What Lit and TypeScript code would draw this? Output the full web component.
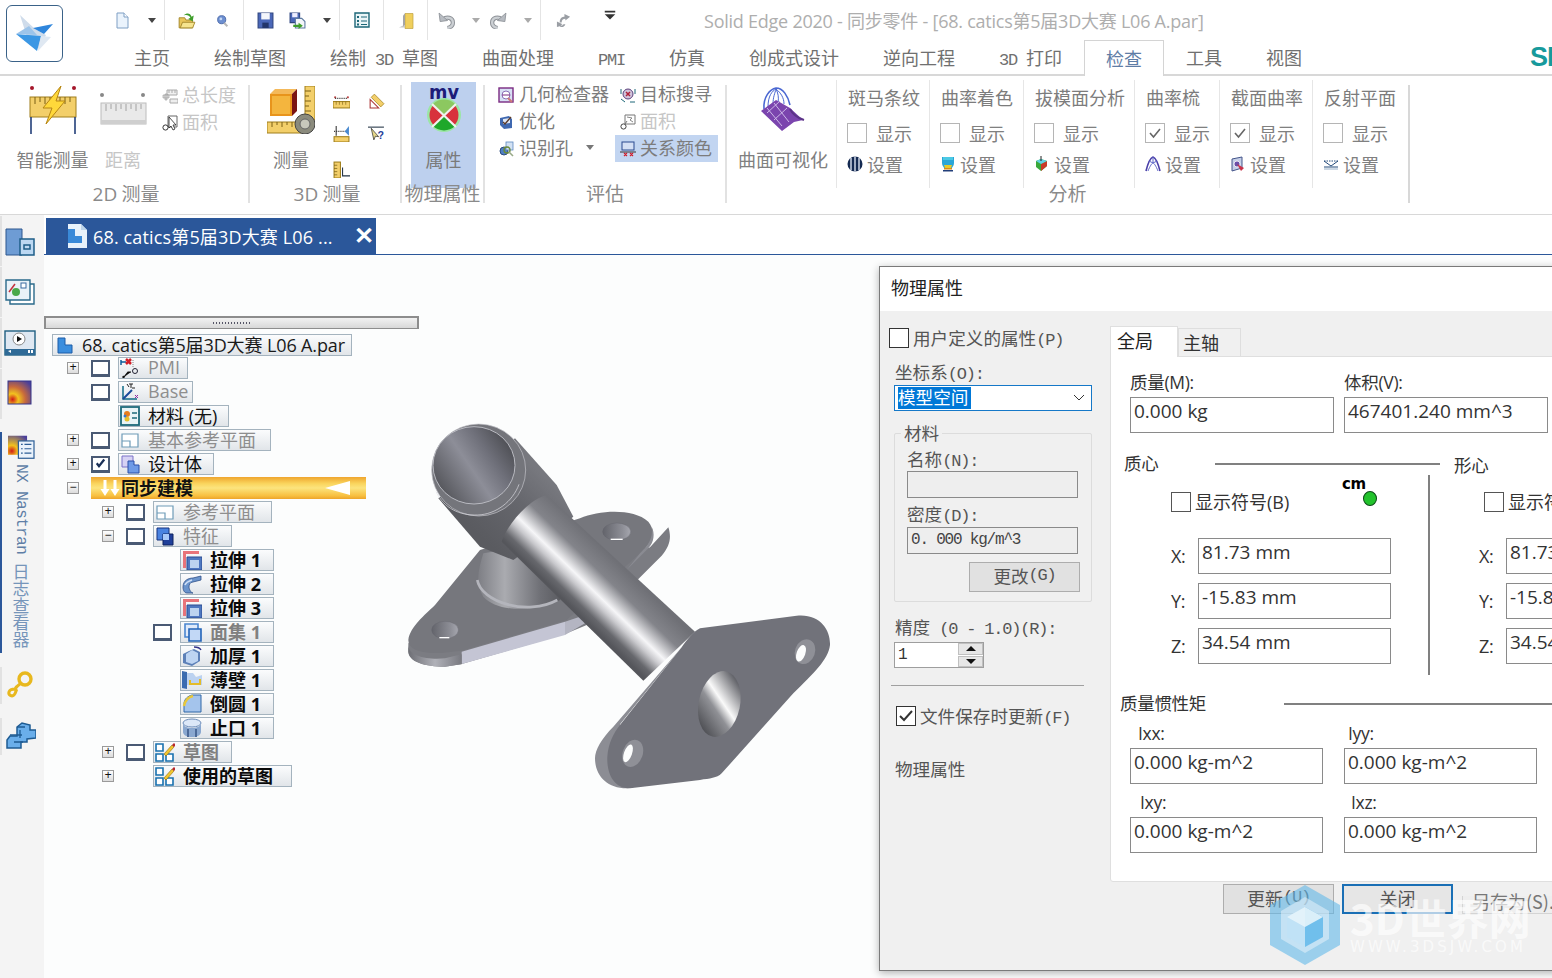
import { LitElement, html, css, svg, TemplateResult } from "lit";
import { customElement } from "lit/decorators.js";

/* wraps ASCII runs in a half-width mono span, the way the ribbon's font sets them */
const t = (s: string) =>
  s.split(/([\x20-\x7e]+)/).map((p, i) => (i % 2 ? html`<span class="m">${p}</span>` : p));

const ic16 = (w: number, h: number, body: unknown, vb = "0 0 16 16") =>
  html`<svg width=${w} height=${h} viewBox=${vb} class="ic">${body}</svg>`;

const Q: Record<string, unknown> = {
  new: svg`<path d="M3 1h7l4 4v11H3z" fill="#eaf3fc" stroke="#7f9fc4"/><path d="M10 1v4h4" fill="#fff" stroke="#7f9fc4"/>`,
  open: svg`<path d="M1 6h5l1 2h6v7H1z" fill="#e9c65a" stroke="#a08428" stroke-width=".8"/><path d="M2 15l2-5h11l-2 5z" fill="#f6e48e" stroke="#a08428" stroke-width=".8"/><path d="M5 4c3-3 6-2 7 1l2-1-1 5-4-2 2-1c-1-2-3-3-6-2z" fill="#3f9e2c"/>`,
  find: svg`<circle cx="7" cy="7" r="5" fill="#6d8fd0" stroke="#3c5da0"/><circle cx="6" cy="6" r="1.700" fill="#c5d8f4"/><path d="M10 11l4 4" stroke="#b8b8b8" stroke-width="2.400"/>`,
  save: svg`<path d="M1 1h14v14H1z" fill="#4a67b8" stroke="#2e447f"/><path d="M4 1h8v6H4z" fill="#f4f6fb"/><path d="M5 10h6v5H5z" fill="#23366b"/>`,
  saveall: svg`<path d="M1 1h9v9H1z" fill="#4a67b8" stroke="#2e447f"/><path d="M3 1h5v4H3z" fill="#eef"/><path d="M6 6h6l3 3v6H6z" fill="#f4f6fb" stroke="#5d7aa0"/><path d="M4 12h5v-2l4 3-4 3v-2H4z" fill="#3f9e2c"/>`,
  props: svg`<path d="M1 1h14v14H1z" fill="#eaf5f7" stroke="#1d6778" stroke-width="1.400"/><path d="M3 4h2v2H3zM3 8h2v2H3zM3 11.500h2v2H3z" fill="#1d6778"/><path d="M7 5h6M7 9h6M7 12.500h6" stroke="#1d6778"/>`,
  door: svg`<path d="M7 1h8v15H7z" fill="#f0cf5c" stroke="#bfa040" stroke-width=".7"/><path d="M1 15l6-3v3z" fill="#c8c8c8"/><path d="M7 1l-2 2v11l2-2z" fill="#a5a5a5"/>`,
  undo: svg`<path d="M5 7c3-3 9-2 9 3 0 2-1 4-5 5" fill="none" stroke="#8d9197" stroke-width="4"/><path d="M5 7c3-3 9-2 9 3 0 2-1 4-5 5" fill="none" stroke="#ccd0d4" stroke-width="2.200"/><path d="M1 1l1 8 7-1z" fill="#b8bcc2" stroke="#8d9197" stroke-width=".8"/>`,
  redo: svg`<path d="M11 7C8 4 2 5 2 10c0 2 1 4 5 5" fill="none" stroke="#8d9197" stroke-width="4"/><path d="M11 7C8 4 2 5 2 10c0 2 1 4 5 5" fill="none" stroke="#ccd0d4" stroke-width="2.200"/><path d="M15 1l-1 8-7-1z" fill="#b8bcc2" stroke="#8d9197" stroke-width=".8"/>`,
  swap: svg`<path d="M9 1l6 3-5 4V6C8 6 6 7 6 10H4c0-5 3-6 5-6zM1 15V9l6 3-2 1c1 1 2 0 3-1h2c-1 3-4 4-6 2z" fill="#9a9ea4"/>`,
  custom: svg`<path d="M2 2h12v2H2z" fill="#333"/><path d="M2 6h12l-6 6z" fill="#333"/>`,
};

const R: Record<string, unknown> = {
  smart: svg`<circle cx="3" cy="2" r="2" fill="#a5162b"/><circle cx="45" cy="2" r="2" fill="#a5162b"/>
    <rect x="1" y="11" width="46" height="20" fill="#f3cf6a" stroke="#a07f1c"/>
    <path d="M6 11v7M11 11v5M16 11v7M21 11v5M26 11v7M31 11v5M36 11v7M41 11v5" stroke="#7a6016"/>
    <path d="M2 31v17M46 31v17" stroke="#24407a" stroke-width="1.600"/>
    <path d="M32 0L14 22h9L17 38 36 15h-9z" fill="#ffd83a" stroke="#b78612"/>`,
  ruler: svg`<circle cx="2" cy="2" r="2" fill="#888"/><circle cx="43" cy="2" r="2" fill="#888"/>
    <rect x="1" y="10" width="45" height="21" fill="#e9e9e9" stroke="#bcbcbc"/><rect x="1" y="27" width="45" height="4" fill="#cfcfcf"/>
    <path d="M6 11v7M11 11v5M16 11v7M21 11v5M26 11v7M31 11v5M36 11v7M41 11v5" stroke="#a2a2a2"/>`,
  len: svg`<path d="M5 2h10v5H5z" fill="#f0f0f0" stroke="#aaa"/><path d="M7 2v3M10 2v3M13 2v3" stroke="#aaa"/><path d="M1 7h6v3H1zM3 6h2v6H3z" fill="#ddd" stroke="#999" stroke-width=".6"/><path d="M8 11h8v4H8z" fill="#eee" stroke="#aaa"/>`,
  area: svg`<path d="M6 1h9v11H6z" fill="#fff" stroke="#666"/><path d="M7 2l7 8h-3l2 4-2 1-2-4-2 2z" fill="#fff" stroke="#222" stroke-width=".8"/><circle cx="3.500" cy="12.500" r="2.600" fill="#fff" stroke="#333"/>`,
  measure: svg`<rect x="38" y="0" width="10" height="34" fill="#f3cf6a" stroke="#a07f1c"/><path d="M38 5h6M38 10h4M38 15h6M38 20h4M38 25h6" stroke="#7a6016"/>
    <path d="M3 8h22v22H3z" fill="#e8941c"/><path d="M3 8l5-5h22l-5 5z" fill="#f4b95a"/><path d="M25 8l5-5v22l-5 5z" fill="#7a1414"/><path d="M5 10h18v18H5z" fill="#f4b53e"/>
    <rect x="0" y="36" width="34" height="11" fill="#f3cf6a" stroke="#a07f1c"/><path d="M5 36v5M10 36v3M15 36v5M20 36v3M25 36v5" stroke="#7a6016"/>
    <circle cx="38" cy="38" r="10" fill="#8b8b7d" stroke="#444"/><circle cx="38" cy="38" r="5" fill="#c8c8bc" stroke="#666"/>`,
  m1: svg`<circle cx="2" cy="5" r="1" fill="#b44"/><circle cx="14" cy="5" r="1" fill="#b44"/><path d="M2 6h12" stroke="#333" stroke-dasharray="1 1"/><rect x="0" y="9" width="16" height="6" fill="#f3cf6a" stroke="#a07f1c"/><path d="M3 9v3M6 9v3M9 9v3M12 9v3" stroke="#7a6016" stroke-width=".6"/>`,
  m2: svg`<path d="M2 15V7l8 8z" fill="none" stroke="#a33"/><path d="M6 2l9 9-3 3-9-9z" fill="#f3cf6a" stroke="#a07f1c" stroke-width=".7"/>`,
  m3: svg`<path d="M3 1v9" stroke="#333"/><path d="M1 6h11" stroke="#333" stroke-dasharray="1 1"/><path d="M15 1l-4 5 4 4z" fill="#4a8ad0"/><rect x="1" y="11" width="14" height="5" fill="#f3cf6a" stroke="#a07f1c"/>`,
  m4: svg`<path d="M0 2h15" stroke="#234"/><path d="M3 3l7 8-3-.5-1.500 3.500z" fill="#e9d98a" stroke="#333" stroke-width=".7"/><text x="9" y="13" font-size="10" font-weight="700" font-family="Liberation Sans" fill="#1f3e9a">?</text>`,
  m5: svg`<rect x="1" y="1" width="6" height="15" fill="#f3cf6a" stroke="#a07f1c"/><path d="M1 4h3M1 7h3M1 10h3M1 13h3" stroke="#7a6016" stroke-width=".7"/><path d="M9 6v8h7" fill="none" stroke="#234"/>`,
  mv: svg`<text x="23" y="14" text-anchor="middle" font-size="20" font-weight="700" font-family="DejaVu Sans" fill="#1c1c78" textLength="30" lengthAdjust="spacingAndGlyphs">mv</text>
    <circle cx="23" cy="30" r="17" fill="#9be6a4"/><circle cx="23" cy="30" r="14.500" fill="#d8323c"/>
    <path d="M23 30L12 19a16 16 0 0 1 22 0z" fill="#8cc860"/><path d="M23 30L12 41a16 16 0 0 0 22 0z" fill="#1fa82a"/><path d="M11 19l24 23M35 19L11 42" stroke="#f0f2ee" stroke-width="2.200"/>`,
  geo: svg`<rect x="1" y="1" width="14" height="14" fill="#d8e0f4" stroke="#7a2a82" stroke-width="1.400"/><circle cx="8" cy="8" r="4" fill="#fff" stroke="#8b6fb8"/><path d="M4 8h8" stroke="#7a2a82"/><path d="M10 11l4 4" stroke="#c77" stroke-width="2"/>`,
  opt: svg`<path d="M2 4l9-2 3 3v9l-8 1-4-4z" fill="#3f68b0"/><path d="M5 5l7-1v5l-7 1z" fill="#dce6f5"/><path d="M5 8l2 2 6-7" fill="none" stroke="#5a3a2a" stroke-width="1.400"/>`,
  hole: svg`<circle cx="6" cy="10" r="4" fill="#4d7ec4" stroke="#2d4c80"/><rect x="8" y="1" width="7" height="8" fill="#d3e2f4" stroke="#5f8bc0" stroke-width=".8"/><circle cx="9" cy="9" r="3" fill="none" stroke="#6b8a3a" stroke-width="1.400"/><path d="M11 11l4 4" stroke="#9a8" stroke-width="1.600"/>`,
  goal: svg`<circle cx="8" cy="7" r="5" fill="#d0c4dc" stroke="#5a3f7a"/><path d="M6 5l4 4M10 5L6 9" stroke="#b0223a" stroke-width="1.500"/><path d="M1 2v5M15 2v5M1 12l4 3M10 15h5" stroke="#1d6778"/>`,
  area2: svg`<path d="M5 1h10v9H5z" fill="#fff" stroke="#777"/><path d="M7 3l5 1-2 2 3 2" fill="none" stroke="#888"/><circle cx="3.500" cy="12.500" r="2.600" fill="#fff" stroke="#444"/><path d="M5 10l2-3" stroke="#777"/>`,
  rel: svg`<rect x="2" y="1" width="12" height="8" fill="#d4dff4" stroke="#2b4a90"/><path d="M0 11h16" stroke="#333"/><path d="M4 12l3 3M7 12l-3 3M10 12l3 3M13 12l-3 3" stroke="#d0202e" stroke-width="1.200"/>`,
  surf: svg`<path d="M4 22C3 10 10 2 16 1c7 0 12 8 14 17" fill="none" stroke="#4b68d2" stroke-width="1.600"/><path d="M8 20C8 9 12 4 16 2M13 17c0-7 2-11 3-15M18 16c1-6 0-10-2-14M24 17c0-6-3-11-8-15" fill="none" stroke="#4b68d2"/>
    <path d="M1 24L16 13l14 8 13 12-9 2-12 9z" fill="#7b45ae"/><path d="M14 16l15 19M7 21l15 18M20 14l-13 12M27 21L14 33" stroke="#cdb8e8"/><path d="M30 22c3 6 8 9 14 11" fill="none" stroke="#5c3488" stroke-width="2"/>`,
  zebra: svg`<circle cx="8" cy="8" r="7.500" fill="#152a52"/><path d="M4 2v12M8 .5v15M12 2v12" stroke="#cfd8e8" stroke-width="1.500"/>`,
  curv: svg`<path d="M2 1h12v6c0 3-2 4-2 5H4c0-1-2-2-2-5z" fill="#2aa6d8"/><path d="M3 1h10v3H3z" fill="#4cc9e4"/><path d="M4 9h8l-1 3H5z" fill="#e8c92a"/><path d="M4 12h8v1.500H4z" fill="#d88a1a"/><path d="M3 14h10v1.500H3z" fill="#223f7a"/>`,
  draft: svg`<path d="M2 5l5-2 6 2v5l-6 5-5-4z" fill="#3aa83a"/><path d="M7 8l6-3v5l-6 5z" fill="#c83a2a"/><path d="M2 5l5-2 6 2-6 3z" fill="#5fd0e4"/><path d="M7 0v5" stroke="#222"/>`,
  comb: svg`<path d="M1 15C3 7 5 2 8 1c3 1 5 6 7 14" fill="none" stroke="#4a3fa8" stroke-width="1.600"/><path d="M3 15C5 10 7 7 8 7s3 3 5 8M8 1v6M4 5l4 2M12 5L8 7" fill="none" stroke="#5f68c8"/>`,
  sect: svg`<path d="M2 3l10-2v11L2 15z" fill="#c5cfe8" stroke="#44558a"/><circle cx="7" cy="8" r="3" fill="#6b4fa8" stroke="#fff" stroke-width=".8"/><path d="M7 8l7 4-3 3z" fill="#c8324a"/>`,
  refl: svg`<path d="M1 5l7 5 7-5M1 11h14" fill="none" stroke="#234a7a"/><path d="M1 5h14" stroke="#234a7a" stroke-dasharray="1.500 1"/><path d="M1 13h14" stroke="#98b0c8"/>`,
};

const N: Record<string, unknown> = {
  root: svg`<path d="M2 3h7v7h7v8H2z" fill="#3b8ede" stroke="#1c5ca8"/>`,
  pmi: svg`<path d="M1 2v5M1 4h5" stroke="#0b5c9a" stroke-width="1.500"/><path d="M6 1l5 5M11 1L6 6" stroke="#d01e28" stroke-width="2.500"/><path d="M13 2v8" stroke="#888" stroke-dasharray="1 1"/><circle cx="15" cy="13" r="2.500" fill="none" stroke="#223"/><path d="M11 14H8l-4 5" stroke="#111" stroke-width="1.200"/><circle cx="3.500" cy="19" r="1.200" fill="#111"/>`,
  base: svg`<path d="M3 4v13h14" fill="none" stroke="#0f6b86" stroke-width="1.500"/><path d="M3 17l9-9" stroke="#1a4a9a" stroke-width="2"/><path d="M7 2l2 3M12 6h3" stroke="#222"/><path d="M15 13l3 3M18 13l-3 3" stroke="#9028a0"/><path d="M9 2h4M11 2v4" stroke="#222"/>`,
  mat: svg`<rect x="1" y="1" width="18" height="18" fill="#e8f4f6" stroke="#1c6a7a" stroke-width="1.800"/><circle cx="7" cy="8" r="3" fill="#e87d1c"/><circle cx="7" cy="13" r="2.500" fill="#e8c02a"/><circle cx="5" cy="10" r="1.500" fill="#3a78c8"/><path d="M12 7h5M12 12h5" stroke="#1c6a7a" stroke-width="1.600"/>`,
  plane: svg`<path d="M2 4h16v13H2z" fill="#fff" stroke="#6e9cb8" stroke-width="1.200"/><path d="M2 11h8v6" fill="none" stroke="#6e9cb8" stroke-width="1.200"/>`,
  body: svg`<path d="M2 2h11v11H2z" fill="#d6d2f4" stroke="#7a72c8"/><path d="M8 7h6v4h5v8H8z" fill="#6e9ae6" stroke="#2b4fa8"/>`,
  feat: svg`<path d="M2 2h12v12H2z" fill="#4a83e0" stroke="#14337e"/><path d="M8 8h10v11H8z" fill="#1f3f9a" stroke="#0f225e"/><path d="M8 8h6v6H8z" fill="#a8c8f8"/>`,
  ext1: svg`<path d="M1 1h16v3H4v14H1z" fill="#e8747a"/><path d="M5 7h15v13H5z" fill="#4e78c0" stroke="#2c4d92"/><path d="M8 10h9v8H8z" fill="#bcd4f0"/>`,
  ext2: svg`<path d="M1 13c0-7 6-9 10-9l8-2v4l-8 2c-3 0-4 3-4 5s2 6 4 6H5c-2 0-4-2-4-6z" fill="#6a94cc" stroke="#2f4f88" stroke-width=".8"/><path d="M3 11c1-3 4-4 7-5" stroke="#d0e0f6" stroke-width="1.600" fill="none"/>`,
  face: svg`<path d="M3 2h13v13H3z" fill="#dfeafa" stroke="#4a86d0" stroke-width="1.600"/><path d="M7 7h12v12H7z" fill="#c2d8f6" stroke="#2464b8" stroke-width="1.600"/>`,
  thick: svg`<path d="M1 8l6-3 5-2 6 3v9l-8 5-9-3z" fill="#5c80b8"/><path d="M4 8l6-4 6 3v8l-6 3-6-2z" fill="#bdd4f2"/><path d="M12 1c3 0 6 1 7 3" stroke="#33338a" fill="none" stroke-width="1.400"/>`,
  thin: svg`<path d="M0 1l5 1v17l-5-1z" fill="#3c6cb0"/><path d="M5 3l6 0 3 4 6-2v10H5z" fill="#bcd2f0"/><path d="M8 10v4h10v-5" fill="none" stroke="#e4bc28" stroke-width="2"/>`,
  round: svg`<path d="M2 18V10C2 5 6 2 10 1h9v17z" fill="#a4c4ec" stroke="#3068a8"/><path d="M2 12C3 7 6 3 11 2" fill="none" stroke="#e8c83a" stroke-width="2.400"/>`,
  lip: svg`<ellipse cx="10" cy="5" rx="9" ry="4" fill="#dce8f8" stroke="#6c8cb8"/><path d="M1 5v9c0 3 4 5 9 5s9-2 9-5V5c0 3-4 5-9 5S1 8 1 5z" fill="#8aa8d0"/><path d="M6 11v8M14 11v8" stroke="#4c6a98" stroke-width="2"/>`,
  sk: svg`<path d="M1 2h7v7H1zM1 12h7v7H1zM11 12h7v7h-7z" fill="#fff" stroke="#1a72b0" stroke-width="1.600"/><path d="M9 12l8-9 2 2-8 9z" fill="#f2c62e" stroke="#8a6a10" stroke-width=".6"/><path d="M17 3l2-2 2 2-2 2z" fill="#b8272c"/>`,
  sync: svg`<path d="M4 1h3v9h3l-4.500 7L1 10h3zM14 1h3v9h3l-4.500 7L11 10h3z" fill="#fff"/>`,
};

const RAIL: Record<string, unknown> = {
  a: svg`<path d="M2 2h16v26H2z" fill="#6e9cd4" stroke="#2d568e"/><path d="M16 12h14v16H16z" fill="#bcd8f2" stroke="#1e5d88" stroke-width="1.500"/><path d="M20 18h6v4h-6z" fill="none" stroke="#1e5d88" stroke-width="1.500"/>`,
  b: svg`<path d="M6 6h24v20H6z" fill="#fff" stroke="#2a6a8a" stroke-width="1.400"/><path d="M2 2h24v20H2z" fill="#eaf2f8" stroke="#2a6a8a" stroke-width="1.400"/><path d="M5 14l6-8" stroke="#c2323c" stroke-width="1.500"/><circle cx="12" cy="14" r="4" fill="#4aa84a"/><rect x="17" y="5" width="5" height="5" fill="#fff" stroke="#3a6aa0"/>`,
  c: svg`<rect x="1" y="2" width="30" height="24" fill="#dfe8f2" stroke="#1f5f82" stroke-width="1.400"/><circle cx="15" cy="10" r="6" fill="#fff" stroke="#888"/><path d="M13 7l5 3-5 3z" fill="#111"/><path d="M1 20h30v6H1z" fill="#2f6a96"/><path d="M4 22l3 2V21zM24 21v3h2v-3zM27 21v3h2v-3z" fill="#fff"/>`,
  d: svg`<defs><radialGradient id="hm" cx=".2" cy=".8" r="1"><stop offset="0" stop-color="#d01a18"/><stop offset=".25" stop-color="#f2c21e"/><stop offset=".55" stop-color="#c86a3c"/><stop offset="1" stop-color="#4a3f9a"/></radialGradient></defs><rect x="3" y="1" width="23" height="23" fill="url(#hm)" stroke="#35358a"/>`,
  e: svg`<rect x="1" y="2" width="22" height="22" fill="url(#hm2)"/><defs><radialGradient id="hm2" cx=".2" cy=".8" r="1"><stop offset="0" stop-color="#d01a18"/><stop offset=".3" stop-color="#f2c21e"/><stop offset="1" stop-color="#4a3f9a"/></radialGradient></defs><rect x="13" y="8" width="18" height="20" fill="#eaf2fb" stroke="#2d5e96" stroke-width="1.400"/><path d="M16 12h2M16 17h2M16 22h2M20 12h8M20 17h8M20 22h8" stroke="#2d5e96" stroke-width="1.400"/>`,
  key: svg`<circle cx="21" cy="10" r="6" fill="none" stroke="#e8b81e" stroke-width="3.400"/><path d="M16 15c-3 2-4 3-5 5-1 0-5 0-6 3s3 5 5 3 2-5 3-6" fill="none" stroke="#e8b81e" stroke-width="3"/>`,
  blk: svg`<path d="M13 7l5-4 8 2v5h6v8l-9 1v3l-6 0v6H3v-8l3-4h7z" fill="#6aaeea" stroke="#1e5b92" stroke-width="1.500"/><path d="M6 15h12M16 10v8M13 7h8M10 22h9" stroke="#1e5b92" stroke-width="1.300" fill="none"/>`,
};

const qat = [
  { cx: 122, i: "new", w: 16, h: 20 }, { cx: 152, d: 1 }, { cx: 164, s: 1 },
  { cx: 187, i: "open", w: 18, h: 18 }, { cx: 222, i: "find", w: 13, h: 13 }, { cx: 243, s: 1 },
  { cx: 265, i: "save", w: 17, h: 17 }, { cx: 297, i: "saveall", w: 17, h: 17 }, { cx: 327, d: 1 }, { cx: 339, s: 1 },
  { cx: 362, i: "props", w: 16, h: 16 }, { cx: 383, s: 1 }, { cx: 406, i: "door", w: 16, h: 17 }, { cx: 427, s: 1 },
  { cx: 446, i: "undo", w: 17, h: 17 }, { cx: 476, d: 2 }, { cx: 498, i: "redo", w: 17, h: 17 }, { cx: 528, d: 2 }, { cx: 540, s: 1 },
  { cx: 563, i: "swap", w: 15, h: 15 }, { cx: 610, i: "custom", w: 14, h: 14, up: 1 },
] as any[];

const tabs = ["主页", "绘制草图", "绘制 3D 草图", "曲面处理", "PMI", "仿真", "创成式设计", "逆向工程", "3D 打印", "检查", "工具", "视图"];

const ana = [
  { title: "斑马条纹", w: 93, on: false, icon: "zebra" },
  { title: "曲率着色", w: 94, on: false, icon: "curv" },
  { title: "拔模面分析", w: 111, on: false, icon: "draft" },
  { title: "曲率梳", w: 85, on: true, icon: "comb" },
  { title: "截面曲率", w: 93, on: true, icon: "sect" },
  { title: "反射平面", w: 96, on: false, icon: "refl" },
];

const tree = [
  { x: 67, e: "+", c: 0, i: "pmi", l: "PMI", w: 70, s: "g" },
  { x: 67, c: 0, i: "base", l: "Base", w: 75, s: "g" },
  { x: 67, i: "mat", l: "材料 (无)", w: 111, s: "n" },
  { x: 67, e: "+", c: 0, i: "plane", l: "基本参考平面", w: 153, s: "g" },
  { x: 67, e: "+", c: 1, i: "body", l: "设计体", w: 96, s: "n" },
  { x: 67, e: "-", sync: 1 },
  { x: 102, e: "+", c: 0, i: "plane", l: "参考平面", w: 119, s: "g" },
  { x: 102, e: "-", c: 0, i: "feat", l: "特征", w: 79, s: "g" },
  { x: 129, i: "ext1", l: "拉伸 1", w: 94, s: "b" },
  { x: 129, i: "ext2", l: "拉伸 2", w: 94, s: "b" },
  { x: 129, i: "ext1", l: "拉伸 3", w: 94, s: "b" },
  { x: 129, c: 0, i: "face", l: "面集 1", w: 94, s: "bg" },
  { x: 129, i: "thick", l: "加厚 1", w: 94, s: "b" },
  { x: 129, i: "thin", l: "薄壁 1", w: 94, s: "b" },
  { x: 129, i: "round", l: "倒圆 1", w: 94, s: "b" },
  { x: 129, i: "lip", l: "止口 1", w: 94, s: "b" },
  { x: 102, e: "+", c: 0, i: "sk", l: "草图", w: 79, s: "bg" },
  { x: 102, e: "+", i: "sk", l: "使用的草图", w: 139, s: "b" },
] as any[];

const check = svg`<path d="M4 10l4 4 8-9" fill="none" stroke="#333" stroke-width="2"/>`;

@customElement("app-root")
export class AppRoot extends LitElement {
  static styles = css`
    :host { display: block; width: 1552px; height: 978px; overflow: hidden; position: relative; background: #fff;
      font-family: "Noto Sans CJK SC", sans-serif; font-size: 18px; color: #777; }
    .m { font-family: "Liberation Mono", monospace; font-size: 17px; letter-spacing: -1.200px; white-space: pre; }
    .ic { display: block; flex: none; }
    .header { height: 74px; display: flex; border-bottom: 2px solid #d8d8d8; position: relative; }
    .appbtn { flex: none; width: 57px; height: 57px; margin: 5px 0 0 6px; border: 1.500px solid #3a6288; border-radius: 6px; box-sizing: border-box; }
    .hcol { flex: 1; min-width: 0; position: relative; }
    .qat { height: 40px; display: flex; align-items: center; }
    .qitem { flex: none; display: flex; align-items: center; justify-content: center; }
    .qsep { flex: none; width: 1px; height: 40px; background: #e4e4e4; }
    .dd { width: 0; height: 0; border-left: 4px solid transparent; border-right: 4px solid transparent; border-top: 5px solid #444; }
    .dd.off { border-top-color: #aaa; }
    .title { margin-left: 87px; font-size: 18px; color: #aeaeae; font-family: "Open Sans", "Noto Sans CJK SC", sans-serif; white-space: nowrap; letter-spacing: -.24px; }
    .tabs { height: 34px; display: flex; padding-left: 49px; }
    .tab { flex: none; padding: 0 22px; line-height: 34px; height: 34px; color: #707070; white-space: nowrap; }
    .tab.on { color: #5f7da6; border: 1px solid #d4d4d4; border-bottom: 0; height: 36px; background: #fff; padding: 0 21px; box-sizing: border-box; position: relative; }
    .siemens { margin-left: auto; font: 700 27px/34px "Liberation Sans", sans-serif; color: #179a9c; width: 22px; overflow: hidden; letter-spacing: -1px; flex: none; }

    .ribbon { height: 138px; display: flex; border-bottom: 1px solid #d8d8d8; }
    .group { flex: none; display: flex; flex-direction: column; }
    .gbody { height: 105px; display: flex; flex: none; }
    .glabel { height: 25px; line-height: 23px; text-align: center; color: #8a8a8a; position: relative; white-space: nowrap; font-size: 19px; }
    .glabel.pad { padding-left: 4px; }
    .glabel .l { font-family: "Open Sans", sans-serif; }
    .gsep { flex: none; width: 2px; height: 118px; margin-top: 9px; background: #e2e2e2; }
    .big { flex: none; display: flex; flex-direction: column; align-items: center; padding-top: 10px; box-sizing: border-box; }
    .big .ilabel { height: 20px; line-height: 20px; white-space: nowrap; color: #808080; }
    .biglabel { margin-top: 15px; }
    .off { color: #c6c6c6 !important; }
    .srow { display: flex; align-items: flex-start; gap: 4px; height: 27px; line-height: 24px; white-space: nowrap; color: #7c7c7c; }
    .srow .ic { margin-top: 5.500px; }
    .scol { flex: none; padding-top: 6px; margin-left: 9px; }
    .mgrid { flex: none; display: grid; grid-template-columns: 35px 35px; grid-template-rows: 33px 33px 39px; padding-top: 7.500px; margin-left: 3px; justify-items: center; align-items: center; }
    .hl { flex: none; width: 65px; height: 106px; margin: 6px 0 0 9px; background: #bdd0ee; display: flex; flex-direction: column; align-items: center; padding-top: 3px; box-sizing: border-box; }
    .hl .ilabel { line-height: 20px; color: #7a7a7a; }
    .evgrid { display: grid; grid-template-columns: 117px 103px; grid-auto-rows: 27px; padding: 5px 0 0 13px; }
    .evgrid .srow { gap: 5px; }
    .evgrid .b { padding-left: 5px; gap: 4px; }
    .evgrid .sel { background: #c2d5f1; }
    .caret { margin: 10px 0 0 8px; border-left: 4px solid transparent; border-right: 4px solid transparent; border-top: 5px solid #777; }
    .acol { flex: none; height: 108px; margin-top: 4px; border-left: 1px solid #e6e6e6; padding-left: 10px; box-sizing: border-box; }
    .atitle { margin: 7px 0 0 1px; height: 20px; line-height: 20px; white-space: nowrap; color: #7c7c7c; }
    .arow { display: flex; align-items: center; margin-top: 16px; height: 20px; gap: 9px; color: #808080; line-height: 17px; }
    .asub { display: flex; align-items: center; margin-top: 11px; height: 20px; gap: 4px; color: #808080; }
    .rcb { width: 20px; height: 20px; border: 1px solid #b5b5b5; box-sizing: border-box; background: #fff; flex: none; }
    .rcb svg { display: block; }

    .lower { display: flex; height: 763px; }
    .rail { flex: none; width: 44px; background: #f4f4f4; display: flex; flex-direction: column; box-sizing: border-box; padding-top: 1px; }
    .ritem { height: 50px; flex: none; border-left: 2px solid #e2e2e2; display: flex; justify-content: center; padding: 11px 7px 0 0; box-sizing: border-box; margin-bottom: 1px; }
    .ritem.active { height: 221px; margin: 12px 0 14px; border-left: 2px solid #2b579a; flex-direction: column; align-items: center; justify-content: flex-start; padding: 2px 5px 0 0; }
    .ritem.small { height: 37px; margin-bottom: 14px; padding-top: 2px; }
    .vert { writing-mode: vertical-rl; color: #7695ba; font-size: 17px; margin-top: 4px; white-space: nowrap; line-height: 20px; }
    .vert .m { font-size: 16.500px; letter-spacing: -.9px; color: #5e7ea6; }
    .content { flex: 1; min-width: 0; display: flex; flex-direction: column; }
    .tabbar { height: 40px; flex: none; border-bottom: 1px solid #2b579a; box-sizing: border-box; padding: 3px 0 0 2px; background: #fff; }
    .doc { width: 330px; height: 36px; background: #2b579a; color: #fff; display: flex; align-items: center; padding-left: 20px; box-sizing: border-box; font-family: "Open Sans", "Noto Sans CJK SC", sans-serif; font-size: 18px; white-space: nowrap; letter-spacing: .15px; }
    .doc .txt { margin-left: 5px; width: 256px; overflow: hidden; }
    .doc .x { font: 700 24px/1 "Liberation Sans", sans-serif; color: #fff; margin-left: 5px; }
    .canvas { flex: 1; position: relative; background: #fcfdfd; overflow: hidden; }
    .tree { padding-top: 61px; }
    .grip { width: 375px; height: 13px; box-sizing: border-box; border: 2px solid #8d8d8d; border-bottom-width: 1px; background: linear-gradient(#f2f2f2, #d8d8d8); display: flex; align-items: center; justify-content: center; margin-bottom: 5px; }
    .grip i { width: 38px; height: 2px; background: repeating-linear-gradient(90deg, #556 0 1px, transparent 1px 3px); }
    .row { display: flex; align-items: center; height: 24px; }
    .rootrow { height: 22px; margin-left: 8px; }
    .exp { flex: none; width: 12px; height: 12px; margin-right: 12px; box-sizing: border-box; }
    .exp.v { border: 1px solid #9a9a9a; background: linear-gradient(#fff, #dcdcdc); font: 400 12px/10px "Liberation Mono", monospace; color: #111; text-align: center; }
    .cb { flex: none; width: 19px; height: 17px; margin-right: 8px; box-sizing: border-box; }
    .cb.v { border: 2px solid #4a5a74; border-bottom-width: 3px; background: #fff; }
    .node { flex: none; height: 22px; box-sizing: border-box; border: 1px solid #a4b3be; background: linear-gradient(#fbfcfd, #e1e5e9); display: flex; align-items: center; padding-left: 1px; white-space: nowrap; font-family: "Open Sans", "Noto Sans CJK SC", sans-serif; font-size: 18px; }
    .node svg { margin-right: 8px; }
    .node span { margin-top: -2px; }
    .node.n { color: #111; }
    .node.g { color: #8e8e8e; }
    .node.b { color: #0a0a0a; font-weight: 700; }
    .node.bg { color: #808080; font-weight: 700; }
    .rnode { color: #1a1a1a; width: 300px; padding-left: 3px; letter-spacing: -.12px; }
    .rnode svg { margin-right: 6px; }
    .syncbar { flex: none; width: 275px; height: 22px; background: linear-gradient(180deg, #efa52e 0, #fad55e 30%, #fce47e 50%, #f8c040 85%, #eda42a 100%); display: flex; align-items: center; padding-left: 8px; box-sizing: border-box; color: #111; font-weight: 700; }
    .syncbar .tx { margin: -2px 0 0 0; }
    .syncbar .arr { margin-left: auto; margin-right: 16px; width: 0; height: 0; border-right: 25px solid #fff; border-top: 7px solid transparent; border-bottom: 7px solid transparent; }
    .model { position: absolute; left: 356px; top: 155px; }

    .dialog { position: absolute; left: 835px; top: 11px; width: 900px; height: 705px; box-sizing: border-box; border: 1px solid #7a7a7a; background: #f0f0f0; box-shadow: 0 2px 8px rgba(0,0,0,.3); display: flex; flex-direction: column; color: #4a4a4a; }
    .dtitle { height: 44px; box-sizing: border-box; padding: 0 0 4px 11px; flex: none; background: #fff; display: flex; align-items: center; color: #222; }
    .dbody { flex: 1; display: flex; min-height: 0; }
    .dleft { flex: none; width: 230px; font-size: 17.600px; }
    .lb { height: 20px; line-height: 17px; white-space: nowrap; color: #555; }
    .dcheck { display: flex; align-items: center; height: 20px; gap: 4px; color: #555; white-space: nowrap; }
    .dcheck span.lt { margin-top: -2px; }
    .dcb { flex: none; width: 20px; height: 20px; border: 1px solid #333; box-sizing: border-box; background: #fff; }
    .dcb svg { display: block; margin: -1px; }
    .combo { margin: 2px 0 0 14px; width: 198px; height: 26px; box-sizing: border-box; border: 1px solid #1578c8; background: #fff; display: flex; align-items: center; padding: 0 6px 0 3px; }
    .combo span { background: #0078d7; color: #fff; width: 73px; line-height: 19px; height: 22px; }
    .combo svg { margin-left: auto; }
    .gbox { position: relative; margin: 22px 0 0 14px; width: 198px; height: 169px; box-sizing: border-box; border: 1px solid #dcdcdc; border-radius: 2px; padding: 16px 0 0 12px; }
    .legend { position: absolute; left: 6px; top: -11px; padding: 0 3px; background: #f0f0f0; line-height: 19px; height: 20px; color: #555; }
    .finp { width: 171px; height: 27px; box-sizing: border-box; border: 1px solid #8a8a8a; background: #eee; margin-top: 1px; font: 16px/24px "Liberation Mono", monospace; letter-spacing: -1.200px; padding-left: 3px; color: #444; white-space: pre; }
    .btn { flex: none; display: flex; align-items: center; justify-content: center; box-sizing: border-box; width: 111px; height: 30px; padding-bottom: 3px; background: #e1e1e1; border: 1px solid #adadad; color: #555; white-space: nowrap; }
    .spin { margin: 4px 0 0 14px; width: 90px; height: 26px; display: flex; border: 1px solid #9e9e9e; box-sizing: border-box; background: #fff; }
    .spin .v { flex: 1; font: 16px/24px "Liberation Mono", monospace; padding-left: 3px; color: #333; }
    .spin .ud { flex: none; width: 25px; display: flex; flex-direction: column; gap: 1px; background: #fff; }
    .spin .ud i { flex: 1; background: #e6e6e6; border: 1px solid #c0c0c0; display: flex; align-items: center; justify-content: center; }
    .up { border-left: 5px solid transparent; border-right: 5px solid transparent; border-bottom: 5px solid #111; }
    .down { border-left: 5px solid transparent; border-right: 5px solid transparent; border-top: 5px solid #111; }
    .dsep { margin: 17px 0 0 11px; width: 193px; height: 1px; background: #a0a0a0; }

    .dright { flex: none; width: 670px; padding-top: 15px; }
    .ptabs { display: flex; height: 30px; }
    .ptab { flex: none; box-sizing: border-box; display: flex; align-items: center; }
    .ptab.on { width: 68px; height: 31px; background: #fff; color: #222; padding: 0 0 5px 6px; border: 1px solid #dfdfdf; border-bottom: 0; position: relative; z-index: 1; }
    .ptab.off2 { width: 63px; height: 28px; margin-top: 2px; border: 1px solid #dedede; border-bottom: 0; padding: 0 0 1px 4px; color: #333; }
    .panel { width: 670px; height: 526px; box-sizing: border-box; background: #fff; border: 1px solid #dfdfdf; border-radius: 0 0 0 3px; }
    .wlab { height: 20px; line-height: 20px; color: #333; white-space: nowrap; font-family: "Open Sans", "Noto Sans CJK SC", sans-serif; font-size: 17.500px; letter-spacing: -.3px; }
    .inp { box-sizing: border-box; height: 36px; border: 1px solid #8a8a8a; background: #fff; color: #333; font-family: "Open Sans", sans-serif; font-size: 19px; line-height: 27px; padding-left: 3px; white-space: nowrap; overflow: hidden; }
    .two { display: grid; grid-template-columns: 204px 204px; column-gap: 10px; padding-left: 19px; margin-top: 15px; }
    .two .inp { margin-top: 5px; }
    .head { display: flex; margin-top: 20px; height: 20px; }
    .head .line { height: 2px; background: #808080; margin-top: 10px; flex: none; }
    .cols { display: flex; height: 200px; margin-top: 2px; }
    .cleft { flex: none; width: 317px; padding-left: 60px; box-sizing: border-box; position: relative; }
    .cright { flex: none; border-left: 2px solid #808080; padding-left: 49px; width: 240px; box-sizing: border-box; }
    .cm { position: absolute; left: 231px; top: 2px; display: flex; align-items: flex-start; }
    .cmt { font: 700 15px/14px "DejaVu Sans", sans-serif; color: #000; letter-spacing: -.4px; }
    .dot { width: 14px; height: 15px; border-radius: 50%; background: #22c22c; border: 1px solid #0d4a18; box-sizing: border-box; margin: 14px 0 0 -3px; }
    .xyz { display: grid; grid-template-columns: 27px 193px; grid-auto-rows: 36px; row-gap: 9px; margin-top: 26px; align-items: center; }
    .xyz .wlab { font-size: 18px; margin-top: 0; }
    .ckpad { margin-top: 17px; }
    .in4 { display: grid; grid-template-columns: 193px 193px; column-gap: 21px; padding-left: 19px; margin-top: 11px; }
    .in4 .wlab { padding-left: 8px; line-height: 18px; }
    .in4 .inp { margin: 4px 0 9px; }
    .in4 .c2 { padding-left: 4px; }
    .dbtns { display: flex; padding-left: 113px; gap: 8px; margin-top: 2px; }
    .btn.def { border: 2px solid #1a6fb5; background: #e6e6e6; }
    .btn.ghost { width: 130px; height: 18px; margin: 12px 0 0 1px; padding: 0 0 7px 9px; background: #eee; border: 1px solid #d4d4d4; border-top: 0; color: #777; justify-content: flex-start; align-items: center; }
    .wm { position: absolute; left: 1270px; top: 885px; display: flex; pointer-events: none; }
    .wmt { margin: 11px 0 0 10px; color: rgba(255,255,255,.68); }
    .wmt .a { font: 700 42px/42px "Noto Sans CJK SC", sans-serif; white-space: nowrap; }
    .wmt .b { font: 400 15px/18px "DejaVu Sans", sans-serif; letter-spacing: 3.100px; margin-top: 0; white-space: nowrap; }
  `;

  qatBar() {
    let right = 63;
    return qat.map((q) => {
      const w = q.s ? 1 : q.d ? 8 : q.w;
      const ml = q.cx - right - w / 2;
      right = q.cx + w / 2;
      const st = `margin-left:${ml}px`;
      if (q.s) return html`<div class="qsep" style=${st}></div>`;
      if (q.d) return html`<div class="qitem" style=${st}><div class="dd ${q.d === 2 ? "off" : ""}"></div></div>`;
      return html`<div class="qitem" style="${st}${q.up ? ";margin-top:-8px" : ""}">${ic16(q.w, q.h, Q[q.i])}</div>`;
    });
  }

  treeRow(r: any) {
    const st = `margin-left:${r.x - 44}px`;
    const exp = html`<div class="exp ${r.e ? "v" : ""}">${r.e ? (r.e === "+" ? "+" : "−") : ""}</div>`;
    if (r.sync)
      return html`<div class="row" style=${st}>${exp}
        <div class="syncbar">${ic16(22, 18, N.sync, "0 0 21 18")}<span class="tx">同步建模</span><span class="arr"></span></div></div>`;
    return html`<div class="row" style=${st}>${exp}
      <div class="cb ${r.c !== undefined ? "v" : ""}">${r.c ? ic16(15, 12, svg`<path d="M3 7l3 4 7-9" fill="none" stroke="#1a2f56" stroke-width="3"/>`) : ""}</div>
      <div class="node ${r.s}" style="width:${r.w}px">${ic16(20, 20, N[r.i], "0 0 20 20")}<span>${r.l}</span></div></div>`;
  }

  xyz(vals: string[]) {
    return html`<div class="xyz">${["X:", "Y:", "Z:"].map((k, i) => html`<div class="wlab">${k}</div><div class="inp">${vals[i]}</div>`)}</div>`;
  }

  model() {
    return html`<svg class="model" width="440" height="390" viewBox="0 0 1320 1170">
      <defs>
        <linearGradient id="tube" gradientUnits="userSpaceOnUse" x1="452" y1="262" x2="318" y2="400">
          <stop offset="0" stop-color="#6f7076"/><stop offset=".3" stop-color="#83848a"/><stop offset=".58" stop-color="#f6f6f8"/><stop offset=".7" stop-color="#c8c8cc"/><stop offset=".88" stop-color="#67686d"/><stop offset="1" stop-color="#55565b"/>
        </linearGradient>
        <linearGradient id="neck" gradientUnits="userSpaceOnUse" x1="360" y1="130" x2="180" y2="320">
          <stop offset="0" stop-color="#77787e"/><stop offset=".4" stop-color="#66676d"/><stop offset="1" stop-color="#5a5b60"/>
        </linearGradient>
        <linearGradient id="inner" gradientUnits="userSpaceOnUse" x1="120" y1="250" x2="340" y2="100">
          <stop offset="0" stop-color="#525358"/><stop offset=".45" stop-color="#8d8e98"/><stop offset=".7" stop-color="#6f707a"/><stop offset="1" stop-color="#4a4b50"/>
        </linearGradient>
        <linearGradient id="boss" x1="0" x2="1" y1="0" y2="0">
          <stop offset="0" stop-color="#7e7f85"/><stop offset=".3" stop-color="#aaabb0"/><stop offset=".7" stop-color="#6f7076"/><stop offset="1" stop-color="#55565b"/>
        </linearGradient>
        <linearGradient id="holeg" x1="0" x2="1" y1="0" y2="0">
          <stop offset="0" stop-color="#63646b"/><stop offset=".7" stop-color="#8d8e96"/><stop offset="1" stop-color="#a6a7af"/>
        </linearGradient>
        <linearGradient id="bore" gradientUnits="userSpaceOnUse" x1="1015" y1="825" x2="900" y2="945">
          <stop offset="0" stop-color="#65666c"/><stop offset=".42" stop-color="#fafafa"/><stop offset=".6" stop-color="#909196"/><stop offset="1" stop-color="#4f5055"/>
        </linearGradient>
        <linearGradient id="lob" x1="0" x2="1" y1="0" y2="0">
          <stop offset="0" stop-color="#6d6e74"/><stop offset=".5" stop-color="#b0b1b8"/><stop offset="1" stop-color="#787980"/>
        </linearGradient>
      </defs>
      <!-- rear flange -->
      <path d="M25 700v25c5 30 50 45 110 45l50-8 310-90 60-25 40-20 190-190c25-30 30-55 20-85l-55 60z" fill="#7b7c82"/>
      <path d="M185 725L495 635v40L185 762z" fill="#c4c5d4"/>
      <path d="M495 635l60-20v25l-60 35z" fill="#b4b5c2"/>
      <path d="M25 705c0 35 60 45 110 40l50-12v30l-50 7c-60 0-110-15-110-45z" fill="url(#lob)"/>
      <path d="M25 690C30 650 75 615 105 585L240 420 540 325c60-25 160-30 205 10 25 30 12 65-25 95L500 630 185 722l-55 6c-70 5-105-10-105-38z" fill="#76777d"/>
      <path d="M720 430c25-25 40-45 35-80 10 20 8 45-10 65l-65 65z" fill="#8a8b92"/>
      <ellipse cx="135" cy="660" rx="40" ry="26" fill="url(#holeg)" stroke="#60616a"/>
      <path d="M118 683h30" stroke="#fff" stroke-width="4"/>
      <ellipse cx="650" cy="365" rx="42" ry="26" fill="url(#holeg)" stroke="#60616a"/>
      <path d="M632 388h36" stroke="#fff" stroke-width="4"/>
      <!-- boss -->
      <path d="M250 430C235 480 225 520 250 560c40 45 150 50 230 10l20-60-130-100z" fill="url(#boss)"/>
      <path d="M232 510c10 65 150 110 240 60" fill="none" stroke="#b4b5bc" stroke-width="8"/>
      <!-- neck -->
      <path d="M345 85L470 225 520 320 340 450 240 410 115 265z" fill="url(#neck)"/>
      <!-- tube -->
      <path d="M440 255L885 665 730 812 305 395C320 345 390 265 440 255z" fill="url(#tube)"/>
      <!-- end of neck -->
      <ellipse cx="236" cy="180" rx="141" ry="138" fill="#74757b" stroke="#c5c6cc" stroke-width="2"/>
      <ellipse cx="222" cy="166" rx="123" ry="116" fill="url(#inner)" stroke="#b8b9c0" stroke-width="3"/>
      <path d="M108 245c25 50 70 72 125 70 55-2 105-40 124-92" fill="none" stroke="#e0e0e6" stroke-width="2"/>
      <!-- front flange -->
      <path d="M845 712L640 950C605 985 585 1020 585 1045c0 50 35 90 95 90l20-2-40-190z" fill="#8c8d94"/>
      <path d="M900 655L1190 617c70-7 102 43 100 88-5 45-50 85-110 145L965 1090c-15 15-35 15-65 20l-210 25c-50 0-70-45-68-95 3-40 18-70 38-95L845 712c15-22 35-47 55-57z" fill="#71727a"/>
      <ellipse cx="958" cy="882" rx="62" ry="100" transform="rotate(12 958 882)" fill="url(#bore)"/>
      <ellipse cx="1215" cy="725" rx="30" ry="38" transform="rotate(20 1215 725)" fill="#8f9097"/>
      <ellipse cx="1203" cy="730" rx="13" ry="26" transform="rotate(20 1203 730)" fill="#fcfdfd"/>
      <ellipse cx="698" cy="1030" rx="30" ry="42" transform="rotate(20 698 1030)" fill="#8f9097"/>
      <ellipse cx="684" cy="1030" rx="12" ry="28" transform="rotate(20 684 1030)" fill="#fcfdfd"/>
    </svg>`;
  }

  render(): TemplateResult {
    return html`
      <div class="header">
        <div class="appbtn">
          <svg width="54" height="54" viewBox="0 0 54 54" class="ic">
            <path d="M13 9l15 14 11 6-7 14-12-12z" fill="#cfdceb"/>
            <path d="M26 22l20-4-9 10z" fill="#2f86dc"/>
            <path d="M9 28l25 2-4 15z" fill="#3b97e4"/>
            <path d="M34 30l10 1-13 14z" fill="#dfe8f2"/>
            <path d="M9 28l21 1-8-9z" fill="#9cc4ea"/>
          </svg>
        </div>
        <div class="hcol">
          <div class="qat">${this.qatBar()}<div class="title">Solid Edge 2020 - 同步零件 - [68. catics第5届3D大赛 L06 A.par]</div></div>
          <div class="tabs">
            ${tabs.map((n) => html`<div class="tab ${n === "检查" ? "on" : ""}">${t(n)}</div>`)}
            <div class="siemens">SIEMENS</div>
          </div>
        </div>
      </div>

      <div class="ribbon">
        <div class="group" style="width:248px">
          <div class="gbody">
            <div class="big" style="width:75px;margin-left:15px">${ic16(48, 48, R.smart, "0 0 48 48")}<div class="ilabel biglabel">智能测量</div></div>
            <div class="big" style="width:60px;margin-left:3px;padding-top:17px">${ic16(47, 34, R.ruler, "0 0 47 34")}<div class="ilabel off" style="margin-top:22px">距离</div></div>
            <div class="scol">
              <div class="srow off">${ic16(16, 16, R.len)}总长度</div>
              <div class="srow off">${ic16(16, 16, R.area)}面积</div>
            </div>
          </div>
          <div class="glabel pad"><span class="l">2D</span> 测量</div>
        </div>
        <div class="gsep"></div>
        <div class="group" style="width:150px">
          <div class="gbody">
            <div class="big" style="width:60px;margin-left:11px">${ic16(48, 48, R.measure, "0 0 48 48")}<div class="ilabel biglabel">测量</div></div>
            <div class="mgrid">
              ${["m1", "m2", "m3", "m4", "m5"].map((k) => ic16(17, 17, R[k]))}
            </div>
          </div>
          <div class="glabel pad"><span class="l">3D</span> 测量</div>
        </div>
        <div class="gsep"></div>
        <div class="group" style="width:81px">
          <div class="gbody"><div class="hl">${ic16(46, 50, R.mv, "0 0 46 50")}<div class="ilabel" style="margin-top:14px">属性</div></div></div>
          <div class="glabel">物理属性</div>
        </div>
        <div class="gsep"></div>
        <div class="group" style="width:240px">
          <div class="gbody">
            <div class="evgrid">
              <div class="srow">${ic16(16, 16, R.geo)}几何检查器</div>
              <div class="srow b">${ic16(16, 16, R.goal)}目标搜寻</div>
              <div class="srow">${ic16(16, 16, R.opt)}优化</div>
              <div class="srow b off">${ic16(16, 16, R.area2)}面积</div>
              <div class="srow">${ic16(16, 16, R.hole)}识别孔<span class="caret"></span></div>
              <div class="srow b sel">${ic16(16, 16, R.rel)}关系颜色</div>
            </div>
          </div>
          <div class="glabel">评估</div>
        </div>
        <div class="gsep"></div>
        <div class="group" style="width:681px">
          <div class="gbody">
            <div class="big" style="width:106px;margin-left:3px;padding-top:11px">${ic16(46, 45, R.surf, "0 0 46 45")}<div class="ilabel" style="margin-top:17px">曲面可视化</div></div>
            ${ana.map(
              (a) => html`<div class="acol" style="width:${a.w}px">
                <div class="atitle">${a.title}</div>
                <div class="arow"><div class="rcb">${a.on ? ic16(18, 18, svg`<path d="M4 9l3.500 4L14 5" fill="none" stroke="#666" stroke-width="1.600"/>`, "0 0 18 18") : ""}</div>显示</div>
                <div class="asub">${ic16(16, 16, R[a.icon])}设置</div>
              </div>`
            )}
          </div>
          <div class="glabel">分析</div>
        </div>
        <div class="gsep" style="background:#d8d8d8"></div>
      </div>

      <div class="lower">
        <div class="rail">
          <div class="ritem">${ic16(32, 30, RAIL.a, "0 0 32 30")}</div>
          <div class="ritem">${ic16(32, 28, RAIL.b, "0 0 32 28")}</div>
          <div class="ritem">${ic16(32, 28, RAIL.c, "0 0 32 28")}</div>
          <div class="ritem">${ic16(30, 26, RAIL.d, "0 0 30 26")}</div>
          <div class="ritem active">${ic16(30, 26, RAIL.e, "0 0 32 30")}<div class="vert">${t("NX Nastran 日志查看器")}</div></div>
          <div class="ritem small">${ic16(32, 32, RAIL.key, "0 0 32 32")}</div>
          <div class="ritem small">${ic16(32, 32, RAIL.blk, "0 0 32 32")}</div>
        </div>
        <div class="content">
          <div class="tabbar">
            <div class="doc">
              <svg width="22" height="26" viewBox="0 0 22 26" class="ic"><path d="M2 1h13l6 6v18H2z" fill="#e8f2fb"/><path d="M15 1v6h6" fill="#bcd4ea"/><path d="M2 6h7v7h7v7H2z" fill="#3a8ad8"/></svg>
              <span class="txt">68. catics第5届3D大赛 L06 ...</span>
              <span class="x">✕</span>
            </div>
          </div>
          <div class="canvas">
            <div class="tree">
              <div class="grip"><i></i></div>
              <div class="row rootrow">
                <div class="node rnode">${ic16(20, 20, N.root, "0 0 20 20")}<span>68. catics第5届3D大赛 L06 A.par</span></div>
              </div>
              ${tree.map((r) => this.treeRow(r))}
            </div>
            ${this.model()}
            <div class="dialog">
              <div class="dtitle">物理属性</div>
              <div class="dbody">
                <div class="dleft">
                  <div class="dcheck" style="margin:17px 0 0 9px"><div class="dcb"></div><span class="lt">${t("用户定义的属性(P)")}</span></div>
                  <div class="lb" style="margin:15px 0 0 15px">${t("坐标系(O):")}</div>
                  <div class="combo"><span>模型空间</span>
                    <svg width="12" height="8" viewBox="0 0 12 8"><path d="M1 1l5 5 5-5" fill="none" stroke="#333"/></svg></div>
                  <div class="gbox">
                    <div class="legend">材料</div>
                    <div class="lb">${t("名称(N):")}</div>
                    <div class="finp"></div>
                    <div class="lb" style="margin-top:7px">${t("密度(D):")}</div>
                    <div class="finp" style="margin-top:2px">0. 000 kg/m^3</div>
                    <div class="btn" style="margin:8px 0 0 62px">${t("更改(G)")}</div>
                  </div>
                  <div class="lb" style="margin:16px 0 0 15px">${t("精度 (0 - 1.0)(R):")}</div>
                  <div class="spin"><div class="v">1</div><div class="ud"><i><b class="up"></b></i><i><b class="down"></b></i></div></div>
                  <div class="dsep"></div>
                  <div class="dcheck" style="margin:20px 0 0 16px"><div class="dcb">${ic16(20, 20, check, "0 0 20 20")}</div><span class="lt">${t("文件保存时更新(F)")}</span></div>
                  <div class="lb" style="margin:34px 0 0 15px">物理属性</div>
                </div>
                <div class="dright">
                  <div class="ptabs"><div class="ptab on">全局</div><div class="ptab off2">主轴</div></div>
                  <div class="panel">
                    <div class="two">
                      <div><div class="wlab">质量(M):</div><div class="inp">0.000 kg</div></div>
                      <div><div class="wlab">体积(V):</div><div class="inp">467401.240 mm^3</div></div>
                    </div>
                    <div class="head">
                      <div class="wlab" style="margin-left:13px;width:91px">质心</div>
                      <div class="line" style="width:225px"></div>
                      <div class="wlab" style="margin:2px 0 0 14px">形心</div>
                    </div>
                    <div class="cols">
                      <div class="cleft">
                        <div class="dcheck ckpad wlab" style="font-size:18px;letter-spacing:0"><div class="dcb" style="border-color:#555"></div>显示符号(B)</div>
                        <div class="cm"><span class="cmt">cm</span><div class="dot"></div></div>
                        ${this.xyz(["81.73 mm", "-15.83 mm", "34.54 mm"])}
                      </div>
                      <div class="cright">
                        <div class="dcheck ckpad wlab" style="font-size:18px;letter-spacing:0;margin-left:5px"><div class="dcb" style="border-color:#555"></div>显示符号(B)</div>
                        ${this.xyz(["81.73 mm", "-15.83 mm", "34.54 mm"])}
                      </div>
                    </div>
                    <div class="head" style="margin-top:18px">
                      <div class="wlab" style="margin-left:9px;width:164px">质量惯性矩</div>
                      <div class="line" style="width:400px"></div>
                    </div>
                    <div class="in4">
                      <div><div class="wlab">Ixx:</div><div class="inp">0.000 kg-m^2</div></div>
                      <div><div class="wlab c2">Iyy:</div><div class="inp">0.000 kg-m^2</div></div>
                      <div><div class="wlab" style="padding-left:10px">Ixy:</div><div class="inp">0.000 kg-m^2</div></div>
                      <div><div class="wlab c2" style="padding-left:7px">Ixz:</div><div class="inp">0.000 kg-m^2</div></div>
                    </div>
                  </div>
                  <div class="dbtns">
                    <div class="btn">${t("更新(U)")}</div>
                    <div class="btn def">关闭</div>
                    <div class="btn ghost">另存为(S)...</div>
                  </div>
                </div>
              </div>
            </div>
          </div>
        </div>
      </div>

      <div class="wm">
        <svg width="70" height="80" viewBox="0 0 70 80" class="ic">
          <path d="M35 0l35 20v40L35 80 0 60V20z" fill="#62b9ea" opacity=".6"/>
          <path d="M35 12l24 14v28L35 68 11 54V26z" fill="#eef6fb" opacity=".5"/>
          <path d="M35 22l18 10v20L35 62z" fill="#62b9ea" opacity=".85"/>
          <path d="M35 22L17 32v20l18 10z" fill="#bfe2f6" opacity=".85"/>
          <path d="M35 22l18 10-18 10-18-10z" fill="#e6f4fb" opacity=".9"/>
        </svg>
        <div class="wmt"><div class="a">3D世界网</div><div class="b">WWW.3DSJW.COM</div></div>
      </div>
    `;
  }
}
